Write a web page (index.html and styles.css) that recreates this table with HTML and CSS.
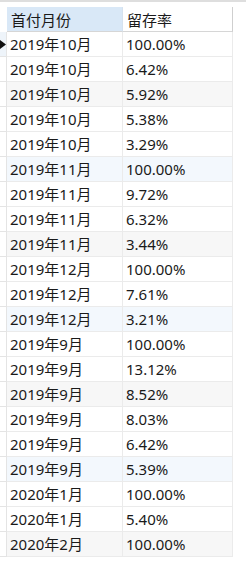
FILE: index.html
```html
<!DOCTYPE html>
<html lang="zh">
<head>
<meta charset="utf-8">
<link rel="stylesheet" href="styles.css">
</head>
<body>
<div class="topbar"></div>
<div class="grid">
  <div class="row head">
    <div class="ind"></div>
    <div class="cell c1 sel">首付月份</div>
    <div class="cell c2">留存率</div>
  </div>
  <div class="row cur"><div class="ind"><svg width="6" height="9" viewBox="0 0 6 9"><path d="M0 0 L6 4.5 L0 9 Z" fill="#111"/></svg></div><div class="cell c1">2019年10月</div><div class="cell c2">100.00%</div></div>
  <div class="row"><div class="ind"></div><div class="cell c1">2019年10月</div><div class="cell c2">6.42%</div></div>
  <div class="row gray"><div class="ind"></div><div class="cell c1">2019年10月</div><div class="cell c2">5.92%</div></div>
  <div class="row"><div class="ind"></div><div class="cell c1">2019年10月</div><div class="cell c2">5.38%</div></div>
  <div class="row"><div class="ind"></div><div class="cell c1">2019年10月</div><div class="cell c2">3.29%</div></div>
  <div class="row blue"><div class="ind"></div><div class="cell c1">2019年11月</div><div class="cell c2">100.00%</div></div>
  <div class="row"><div class="ind"></div><div class="cell c1">2019年11月</div><div class="cell c2">9.72%</div></div>
  <div class="row"><div class="ind"></div><div class="cell c1">2019年11月</div><div class="cell c2">6.32%</div></div>
  <div class="row gray"><div class="ind"></div><div class="cell c1">2019年11月</div><div class="cell c2">3.44%</div></div>
  <div class="row"><div class="ind"></div><div class="cell c1">2019年12月</div><div class="cell c2">100.00%</div></div>
  <div class="row"><div class="ind"></div><div class="cell c1">2019年12月</div><div class="cell c2">7.61%</div></div>
  <div class="row blue"><div class="ind"></div><div class="cell c1">2019年12月</div><div class="cell c2">3.21%</div></div>
  <div class="row"><div class="ind"></div><div class="cell c1">2019年9月</div><div class="cell c2">100.00%</div></div>
  <div class="row"><div class="ind"></div><div class="cell c1">2019年9月</div><div class="cell c2">13.12%</div></div>
  <div class="row gray"><div class="ind"></div><div class="cell c1">2019年9月</div><div class="cell c2">8.52%</div></div>
  <div class="row"><div class="ind"></div><div class="cell c1">2019年9月</div><div class="cell c2">8.03%</div></div>
  <div class="row"><div class="ind"></div><div class="cell c1">2019年9月</div><div class="cell c2">6.42%</div></div>
  <div class="row blue"><div class="ind"></div><div class="cell c1">2019年9月</div><div class="cell c2">5.39%</div></div>
  <div class="row"><div class="ind"></div><div class="cell c1">2020年1月</div><div class="cell c2">100.00%</div></div>
  <div class="row"><div class="ind"></div><div class="cell c1">2020年1月</div><div class="cell c2">5.40%</div></div>
  <div class="row gray"><div class="ind"></div><div class="cell c1">2020年2月</div><div class="cell c2">100.00%</div></div>
</div>
</body>
</html>
```
FILE: styles.css
```css
html, body {
  margin: 0;
  padding: 0;
  background: #ffffff;
}
body {
  font-family: "Noto Sans", "Noto Sans CJK SC", sans-serif;
  font-size: 15px;
  color: #1a1a1a;
}
.topbar {
  height: 2px;
  background: #dedede;
}
.grid {
  margin-top: 5px;
  display: flex;
  flex-direction: column;
  width: 233px;
}
.row {
  display: flex;
  height: 25px;
}
.ind {
  width: 7px;
  box-sizing: border-box;
  border-right: 1px solid #e4e4e4;
  border-bottom: 1px solid #e4e4e4;
  display: flex;
  align-items: center;
}
.ind svg {
  display: block;
}
.cell {
  box-sizing: border-box;
  border-right: 1px solid #ebebeb;
  border-bottom: 1px solid #ebebeb;
  padding-left: 3px;
  display: flex;
  align-items: center;
  white-space: nowrap;
  overflow: hidden;
  line-height: 1;
}
.c1 { width: 116px; }
.c2 { width: 110px; }
.head .ind {
  border: none;
}
.head .cell {
  border-bottom: 1px solid #d6d6d6;
  font-family: "Noto Sans CJK SC", sans-serif;
  font-size: 15px;
  padding-left: 4px;
}
.head .c2 {
  border-right: 1px solid #cfcfcf;
}
.head .sel {
  background: #d9e8f7;
  border-right: 1px solid #d6e2ee;
}
.cur .ind {
  background: #eef4fa;
}
.gray .cell { background: #f7f7f7; }
.blue .cell { background: #f3f8fd; }
```
